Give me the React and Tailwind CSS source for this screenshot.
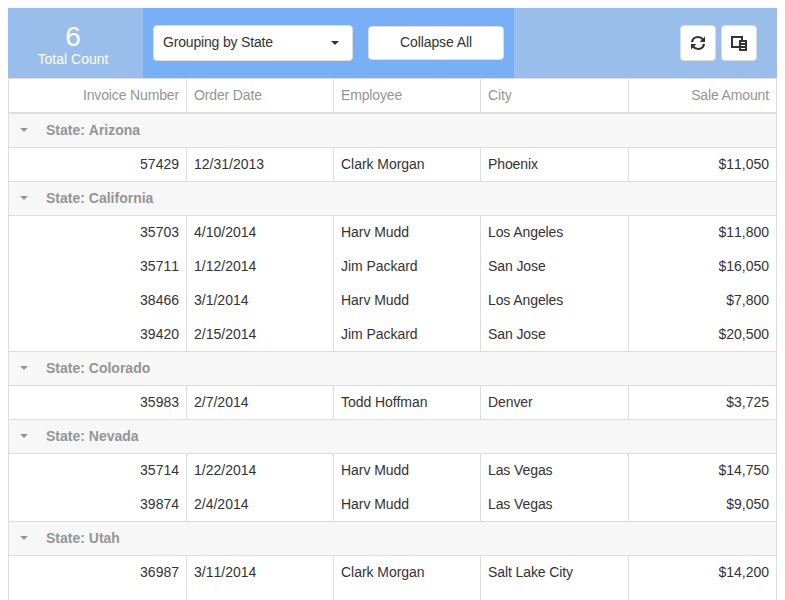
const columns = [
  { title: "Invoice Number", width: "w-[178px]", align: "text-right", type: "[font-kerning:none]" },
  { title: "Order Date", width: "w-[147px]", align: "text-left", type: "[font-kerning:none]" },
  { title: "Employee", width: "w-[147px]", align: "text-left", type: "tracking-[-0.04px]" },
  { title: "City", width: "w-[148px]", align: "text-left", type: "tracking-[-0.1px]" },
  { title: "Sale Amount", width: "w-[147px]", align: "text-right", type: "[font-kerning:none]" },
];

const groups = [
  { state: "Arizona", rows: [["57429", "12/31/2013", "Clark Morgan", "Phoenix", "$11,050"]] },
  {
    state: "California",
    rows: [
      ["35703", "4/10/2014", "Harv Mudd", "Los Angeles", "$11,800"],
      ["35711", "1/12/2014", "Jim Packard", "San Jose", "$16,050"],
      ["38466", "3/1/2014", "Harv Mudd", "Los Angeles", "$7,800"],
      ["39420", "2/15/2014", "Jim Packard", "San Jose", "$20,500"],
    ],
  },
  { state: "Colorado", rows: [["35983", "2/7/2014", "Todd Hoffman", "Denver", "$3,725"]] },
  {
    state: "Nevada",
    rows: [
      ["35714", "1/22/2014", "Harv Mudd", "Las Vegas", "$14,750"],
      ["39874", "2/4/2014", "Harv Mudd", "Las Vegas", "$9,050"],
    ],
  },
  {
    state: "Utah",
    rows: [
      ["36987", "3/11/2014", "Clark Morgan", "Salt Lake City", "$14,200"],
      ["", "", "", "", "$9,500"],
    ],
  },
];

function Caret({ className }) {
  return (
    <svg viewBox="0 0 8 4" className={className} fill="currentColor">
      <path d="M0 0h8L4 4z" />
    </svg>
  );
}

function RefreshIcon() {
  return (
    <svg viewBox="0 0 18 18" className="size-[18px]" fill="none" stroke="currentColor" strokeWidth="2.2">
      <path d="M3 8.2C3.4 5 6 3 9 3C11 3 12.8 4 14 5.6M15 9.8C14.6 13 12 15 9 15C7 15 5.2 14 4 12.4" />
      <path d="M16 2.6v5.4h-5.4zM2 15.4v-5.4h5.4z" fill="currentColor" stroke="none" />
    </svg>
  );
}

function ColumnChooserIcon() {
  return (
    <svg viewBox="0 0 18 18" className="size-[18px]" fill="currentColor" shapeRendering="crispEdges">
      <path fillRule="evenodd" d="M1 2h12v4h-2V4H3v8h6v2H1zM9 6h8v11H9zM11 8v1h4V8zM11 11v1h4v-1zM11 14v1h4v-1z" />
    </svg>
  );
}

function HeaderCell({ column, last }) {
  return (
    <div
      className={`${column.width} ${column.align} shrink-0 px-[7px] leading-[33px] tracking-[-0.14px] ${last ? "" : "border-r border-[#ddd]"}`}
    >
      {column.title}
    </div>
  );
}

function DataCell({ column, value, last }) {
  return (
    <div
      className={`${column.width} ${column.align} ${column.type} shrink-0 px-[7px] leading-[33px] ${last ? "" : "border-r border-[#ddd]"}`}
    >
      {value}
    </div>
  );
}

export default function App() {
  return (
    <div className="h-[600px] overflow-hidden bg-white px-2 pt-2 font-['Liberation_Sans',Arial,sans-serif] text-[14px] text-[#333]">
      <div className="w-[769px]">
        <div className="flex h-[70px] items-center bg-[#99beeb]">
          <div className="flex w-[135px] flex-col items-center pt-[5px] pr-[5px] text-white">
            <span className="text-[28px] leading-[28px]">6</span>
            <span className="leading-[17px]">Total Count</span>
          </div>
          <div className="flex h-full w-[371px] items-center gap-[15px] bg-[#78b0f8] px-2.5">
            <div className="flex h-9 w-[200px] items-center justify-between rounded border border-[#ddd] bg-white pr-[13px] pl-[9px]">
              <span className="pb-0.5 tracking-[-0.17px]">Grouping by State</span>
              <Caret className="h-1 w-2" />
            </div>
            <button className="h-[34px] w-[136px] rounded border border-[#ddd] bg-white pb-0.5 tracking-[-0.08px]">
              Collapse All
            </button>
          </div>
          <div className="flex flex-1 justify-end gap-[5px] pr-5">
            <button className="flex size-9 items-center justify-center rounded border border-[#ddd] bg-white">
              <RefreshIcon />
            </button>
            <button className="flex size-9 items-center justify-center rounded border border-[#ddd] bg-white">
              <ColumnChooserIcon />
            </button>
          </div>
        </div>
        <div className="border border-[#ddd]">
          <div className="flex h-[35px] border-b-2 border-[#ddd] text-[#959595]">
            {columns.map((column, i) => (
              <HeaderCell key={column.title} column={column} last={i === columns.length - 1} />
            ))}
          </div>
          {groups.map((group) => (
            <div key={group.state}>
              <div className="flex h-[34px] items-center border-b border-[#ddd] bg-[#f7f7f7] font-bold text-[#959595]">
                <Caret className="mb-0.5 ml-[11px] h-1 w-2" />
                <span className="ml-[18px] [font-kerning:none]">State: {group.state}</span>
              </div>
              <div className="border-b border-[#ddd]">
                {group.rows.map((row, i) => (
                  <div key={i} className={`flex ${i === group.rows.length - 1 ? "h-[33px]" : "h-[34px]"}`}>
                    {columns.map((column, c) => (
                      <DataCell key={column.title} column={column} value={row[c]} last={c === columns.length - 1} />
                    ))}
                  </div>
                ))}
              </div>
            </div>
          ))}
        </div>
      </div>
    </div>
  );
}
